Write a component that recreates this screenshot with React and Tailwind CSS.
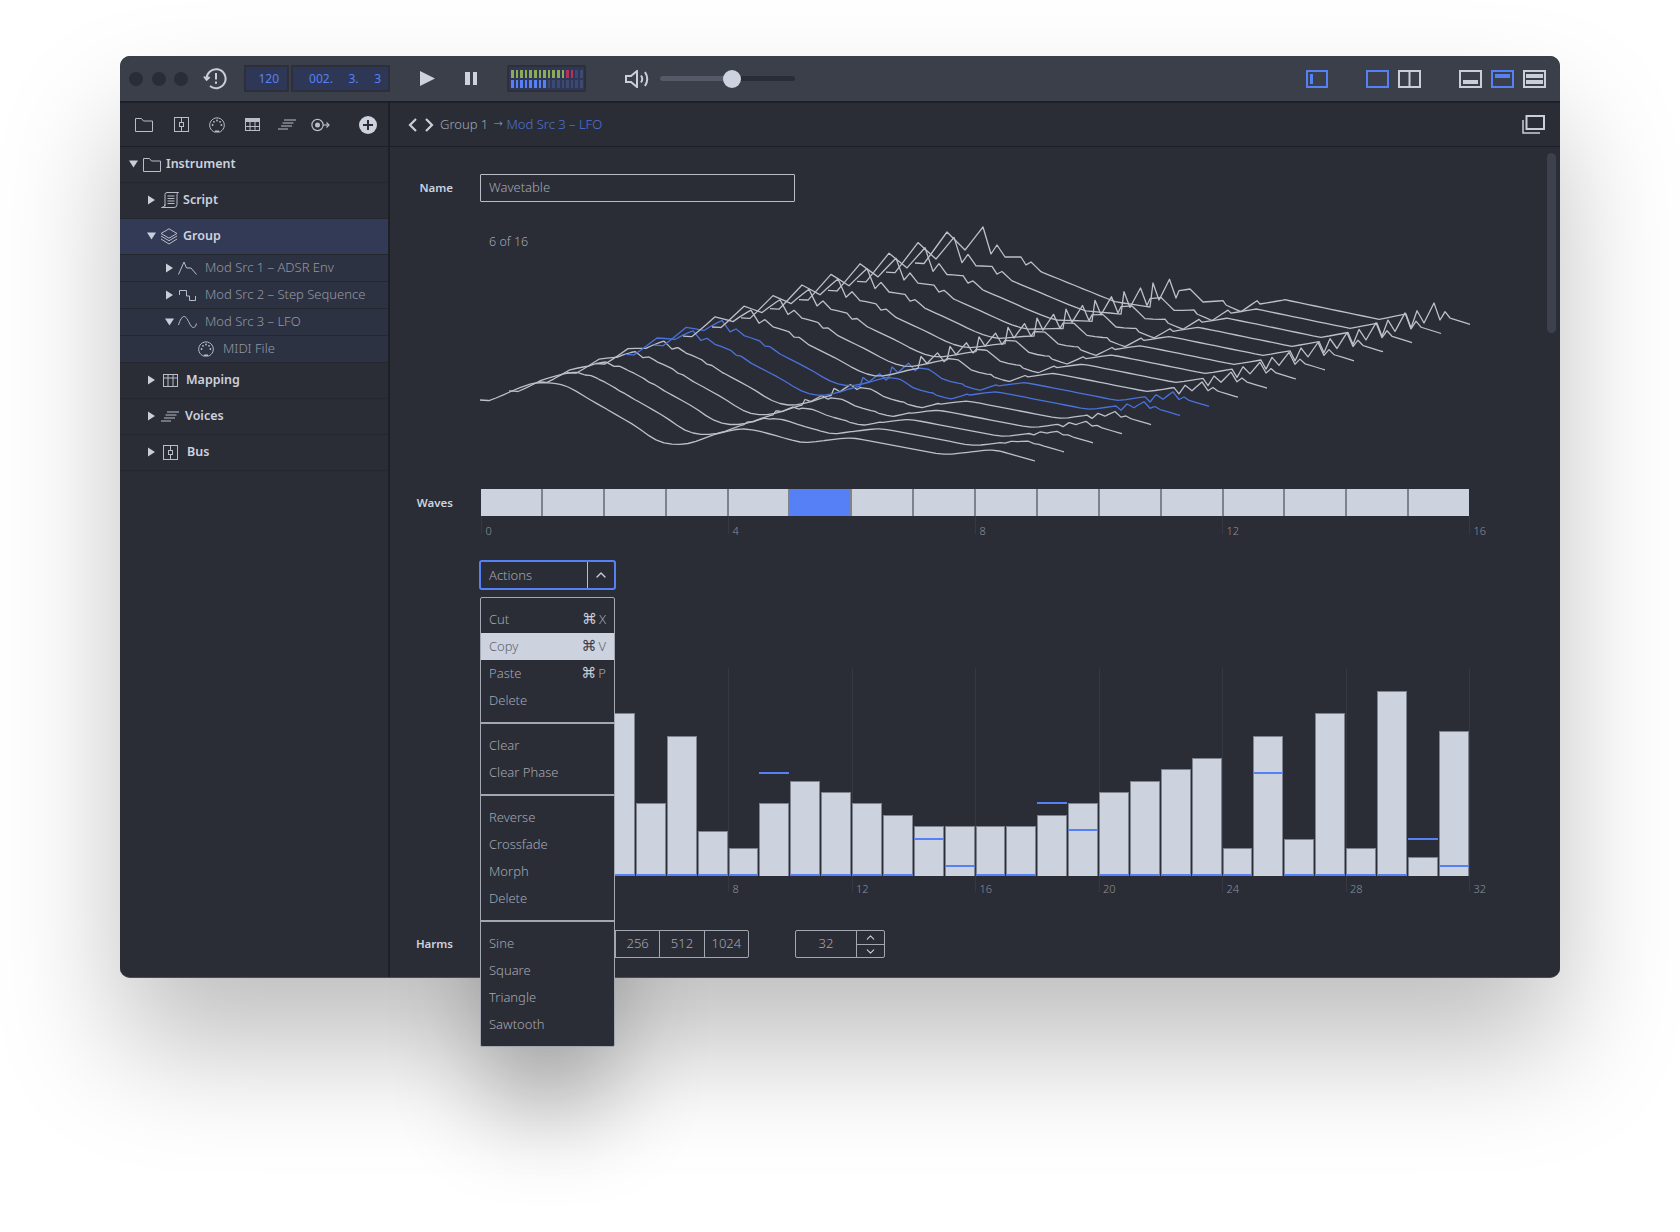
import { ChevronDown, ChevronUp } from 'lucide-react';

const K0 = [[0,0],[10.7,.7],[34,-10],[54,-17.7],[72,-17.3],[88,-14],[102,-5],[157,26.7],[176.7,41.7],[196,45],[212,43.3],[232,35],[259.7,28.3],[275.5,30],[323,43.3],[370.6,37.3],[465,55],[512.9,49.3],[520,51],[555,61]];
const K15 = [[0,0],[9,.5],[32,-31],[50,-13],[68,-36],[76,-9],[82,-18],[90,-6],[106,-6],[111,2],[116,-1],[126,8.7],[200,38.7],[235,44],[238,20],[244,37],[254.5,16.3],[261,35],[264,27.7],[275,26],[288,39],[308,37.7],[311,42],[326,48.7],[342,37.7],[345,41],[370,36.7],[464,56.3],[491,51],[496,65],[502,47.7],[509,60],[519,40],[525,57],[530,48.7],[535,55],[555,61.3]];

const interp = (pts, t) => {
  for (let i = 1; i < pts.length; i++) {
    if (t <= pts[i][0]) {
      const [t0, v0] = pts[i - 1];
      const [t1, v1] = pts[i];
      return v0 + ((v1 - v0) * (t - t0)) / (t1 - t0);
    }
  }
  return pts[pts.length - 1][1];
};

// the front wave is round, so average it a little
const smooth = (pts, t) => {
  const sample = [-8, -4, 0, 4, 8].map((d) => interp(pts, Math.min(555, Math.max(0, t + d))));
  return sample.reduce((sum, v) => sum + v, 0) / sample.length;
};

const grid = [...new Set([
  ...K15.map((p) => p[0]),
  ...Array.from({ length: 70 }, (_, i) => i * 8),
])].filter((t) => t <= 555).concat(555).sort((a, b) => a - b);

const wavePoints = (k) => grid.map((t) => {
  const a = k / 15;
  const edge = t < 10 || t > 545;
  const hump = t > 190 && t < 300 ? 7 * Math.sin(Math.PI * a) * Math.sin((Math.PI * (t - 190)) / 110) : 0;
  const dy = (edge ? interp(K0, t) : smooth(K0, t)) * (1 - a) + interp(K15, t) * a - hump;
  return `${(t + 29 * k).toFixed(1)},${(175 + dy - 9.13 * k).toFixed(1)}`;
}).join(' ');

const BARS = [
  { top: 800 }, { top: 780 }, { top: 760 }, { top: 740 },
  { top: 714.3, m: 875 }, { top: 804.3, m: 875 }, { top: 736.7, m: 875 }, { top: 831.7, m: 875 },
  { top: 849.3, m: 875 }, { top: 804.3, m: 772.7 }, { top: 781.7, m: 875 }, { top: 793.3, m: 875 },
  { top: 804.3, m: 875 }, { top: 815.7, m: 875 }, { top: 826.7, m: 839 }, { top: 826.7, m: 866 },
  { top: 826.7, m: 875 }, { top: 826.7, m: 875 }, { top: 815.7, m: 803 }, { top: 804.3, m: 830 },
  { top: 793.3, m: 875 }, { top: 781.7, m: 875 }, { top: 770.3, m: 875 }, { top: 759.3, m: 875 },
  { top: 849.3, m: 875 }, { top: 736.7, m: 772.7 }, { top: 840.3, m: 875 }, { top: 714.3, m: 875 },
  { top: 849.3, m: 875 }, { top: 691.7, m: 875 }, { top: 858.3, m: 839 }, { top: 732.3, m: 866 },
];

const MENU = [
  [['Cut', 'X'], ['Copy', 'V', true], ['Paste', 'P'], ['Delete']],
  [['Clear'], ['Clear Phase']],
  [['Reverse'], ['Crossfade'], ['Morph'], ['Delete']],
  [['Sine'], ['Square'], ['Triangle'], ['Sawtooth']],
];

const Svg = ({ w, h, stroke = '#b9bdc8', sw = 1, className = '', children }) => (
  <svg width={w} height={h} viewBox={`0 0 ${w} ${h}`} fill="none" stroke={stroke} strokeWidth={sw} className={`shrink-0 ${className}`}>
    {children}
  </svg>
);

const FolderIcon = () => (
  <Svg w={18} h={15}><path d="M.5 14.5V1.5h6l2 2.5h9v10.5z" /></Svg>
);
const BusIcon = () => (
  <Svg w={16} h={15}>
    <rect x=".5" y=".5" width="14" height="14" />
    <path d="M7.5 .5v5M7.5 9.5v5" />
    <rect x="5.5" y="5.5" width="4" height="4" />
  </Svg>
);
const MidiIcon = ({ size = 16 }) => (
  <svg width={size} height={size} viewBox="0 0 16 16" fill="none" stroke="#b9bdc8" className="shrink-0">
    <path d="M6 15.2a7.3 7.3 0 1 1 4 0" />
    <rect x="6" y="13.5" width="4" height="2" fill="#b9bdc8" stroke="none" />
    <g fill="#b9bdc8" stroke="none">
      <circle cx="3.6" cy="8" r=".9" /><circle cx="5" cy="4.8" r=".9" /><circle cx="8" cy="3.5" r=".9" /><circle cx="11" cy="4.8" r=".9" /><circle cx="12.4" cy="8" r=".9" />
    </g>
  </svg>
);
const TableIcon = () => (
  <Svg w={15} h={13}>
    <rect x=".5" y=".5" width="14" height="12" />
    <rect x="0" y="0" width="15" height="4" fill="#b9bdc8" stroke="none" />
    <path d="M5 4v9M10 4v9M0 8.5h15" />
  </Svg>
);
const VoicesIcon = () => (
  <Svg w={18} h={11} sw={1.2}>
    <path d="M6 1h12M4.5 4h11M3 7h11M0 10h10" />
  </Svg>
);
const RouteIcon = () => (
  <Svg w={19} h={14} sw={1.2}>
    <circle cx="6.5" cy="7" r="5.6" />
    <circle cx="6.5" cy="7" r="2.5" fill="#b9bdc8" stroke="none" />
    <path d="M12 7h6" />
    <path d="M15.5 4.5l2.5 2.5-2.5 2.5" />
  </Svg>
);
const ScriptIcon = () => (
  <Svg w={18} h={16}>
    <path d="M4 14.5V2.5q0-2 2-2h11.5q-1.5 .5-1.5 2v10q0 3-3 3H.5q3 0 3.5-3" />
    <path d="M6.5 4h7M6.5 6.5h7M6.5 9h7M6.5 11.5h7" />
  </Svg>
);
const LayersIcon = () => (
  <Svg w={18} h={17}>
    <path d="M9 .8l8 4.7-8 4.7-8-4.7z" />
    <path d="M1 8l8 4.7L17 8" />
    <path d="M1 11l8 5 8-5" />
  </Svg>
);
const AdsrIcon = () => (
  <Svg w={19} h={14}><path d="M.5 13.5L6 1l2.5 6H13l5.5 6.5" /></Svg>
);
const StepIcon = () => (
  <Svg w={17} h={11}><path d="M.5 5V.5h7V6h3v4.5h6V6" /></Svg>
);
const SineIcon = () => (
  <Svg w={19} h={12}><path d="M.5 9C2 4 4 .5 6 .5s3.5 3 5 6 3 5 4.5 5 2.5-2 3-4" /></Svg>
);
const GridIcon = () => (
  <Svg w={15} h={13}>
    <rect x=".5" y=".5" width="14" height="12" />
    <path d="M5 .5v12M10 .5v12M.5 4h14" />
  </Svg>
);
const Caret = ({ open, color = '#c9ced9' }) => (
  <svg width="9" height="10" viewBox="0 0 9 10" fill={color} className="shrink-0">
    {open ? <path d="M0 1.5h9L4.5 8.5z" /> : <path d="M1 .5l7 4.5-7 4.5z" />}
  </svg>
);

const Frame = ({ blue, children, w = 23 }) => {
  const c = blue ? '#5680f5' : '#c9ced9';
  return (
    <svg width={w} height="18" viewBox={`0 0 ${w} 18`} fill="none" className="shrink-0">
      <rect x="1" y="1" width={w - 2} height="16" stroke={c} strokeWidth="2" />
      <g fill={c} stroke={c}>{children}</g>
    </svg>
  );
};

const TREE = [
  { label: 'Instrument', Icon: FolderIcon, open: true, caret: 'pl-[9px]', gap: 'ml-[5px]', textGap: 'ml-[5px]', h: 'h-[36px]' },
  { label: 'Script', Icon: ScriptIcon, caret: 'pl-[27px]', gap: 'ml-[5px]', textGap: 'ml-[4px]', h: 'h-[36px]' },
  { label: 'Group', Icon: LayersIcon, open: true, caret: 'pl-[27px]', gap: 'ml-[4px]', textGap: 'ml-[5px]', h: 'h-[36px]', group: true },
  { label: 'Mod Src 1 – ADSR Env', Icon: AdsrIcon, caret: 'pl-[45px]', gap: 'ml-[4px]', textGap: 'ml-[8px]', sub: true },
  { label: 'Mod Src 2 – Step Sequence', Icon: StepIcon, caret: 'pl-[45px]', gap: 'ml-[5px]', textGap: 'ml-[9px]', sub: true },
  { label: 'Mod Src 3 – LFO', Icon: SineIcon, open: true, caret: 'pl-[45px]', gap: 'ml-[4px]', textGap: 'ml-[8px]', sub: true },
  { label: 'MIDI File', Icon: MidiIcon, caret: 'pl-[78px]', noCaret: true, textGap: 'ml-[9px]', sub: true },
  { label: 'Mapping', Icon: GridIcon, caret: 'pl-[27px]', gap: 'ml-[7px]', textGap: 'ml-[8px]', h: 'h-[36px]' },
  { label: 'Voices', Icon: VoicesIcon, caret: 'pl-[27px]', gap: 'ml-[5px]', textGap: 'ml-[6px]', h: 'h-[36px]' },
  { label: 'Bus', Icon: BusIcon, caret: 'pl-[27px]', gap: 'ml-[7px]', textGap: 'ml-[8px]', h: 'h-[36px]' },
];

const TreeRow = ({ item }) => {
  const { label, Icon, open, caret, gap, textGap, h, group, sub, noCaret } = item;
  const bg = group ? 'bg-[#333a55]' : sub ? 'bg-[#2d3243]' : '';
  return (
    <div className={`flex items-center border-b border-[#25272f] ${caret} ${sub ? 'h-[27px]' : `${h} pb-[1px]`} ${bg}`}>
      {!noCaret && <Caret open={open} />}
      <div className={gap}><Icon /></div>
      <span className={`${textGap} ${sub ? 'text-[13px] font-light text-[#9498a4]' : 'text-[12.5px] font-semibold text-[#ccd2de]'}`}>{label}</span>
    </div>
  );
};

const Meter = () => (
  <div className="ml-[30px] flex h-[27px] w-[79px] items-center justify-center rounded-[2px] bg-[#2d303a]">
    <div className="flex h-[23px] w-[75px] flex-col justify-center gap-[2px] bg-[#2e3856] pl-[2px]">
      <div className="flex h-[8px] gap-[2px]">
        {Array.from({ length: 16 }).map((_, i) => (
          <div key={i} className={`w-[2.6px] ${i < 12 ? 'bg-[#8cab52]' : i < 14 ? 'bg-[#b5325a]' : 'bg-[#3d4a70]'}`} />
        ))}
      </div>
      <div className="flex h-[8px] gap-[2px]">
        {Array.from({ length: 16 }).map((_, i) => (
          <div key={i} className={`w-[2.6px] ${i < 8 ? 'bg-[#5680f5]' : 'bg-[#3d4a70]'}`} />
        ))}
      </div>
    </div>
  </div>
);

const Toolbar = () => (
  <div className="flex h-[47px] shrink-0 items-center rounded-t-[10px] border-b-2 border-[#1d1f26] bg-[#3b3f4a] pl-[9px]">
    <div className="flex gap-[8.5px]">
      <div className="h-[14px] w-[14px] rounded-full bg-[#2a2d36]" />
      <div className="h-[14px] w-[14px] rounded-full bg-[#2a2d36]" />
      <div className="h-[14px] w-[14px] rounded-full bg-[#2a2d36]" />
    </div>
    <svg width="24" height="24" viewBox="0 0 24 24" fill="none" stroke="#c9ced9" strokeWidth="2" className="ml-[15px] shrink-0">
      <path d="M3.6 12.5A9.5 9.5 0 1 1 7 19" />
      <path d="M1 9.5l2.6 3.3 3-2.8" />
      <path d="M13 6v6.5M13 14.5v2.2" />
    </svg>
    <div className="ml-[17px] flex h-[27px] w-[45px] items-center justify-end border-2 border-[#2d303a] bg-[#2e3856] pr-[8px] text-[12px] text-[#5680f5]">120</div>
    <div className="ml-[2px] flex h-[27px] w-[99px] items-center justify-end whitespace-pre border-2 border-[#2d303a] bg-[#2e3856] pr-[7px] text-[12px] text-[#5680f5]">002.     3.     3</div>
    <svg width="15" height="15" viewBox="0 0 15 15" fill="#ccd2de" className="ml-[30px] shrink-0"><path d="M0 0l15 7.5L0 15z" /></svg>
    <div className="ml-[30px] flex gap-[3px]">
      <div className="h-[13px] w-[4.5px] bg-[#ccd2de]" />
      <div className="h-[13px] w-[4.5px] bg-[#ccd2de]" />
    </div>
    <Meter />
    <svg width="25" height="18" viewBox="0 0 25 18" fill="none" stroke="#c9ced9" strokeWidth="2" className="ml-[39px] shrink-0">
      <path d="M1 6h5l6-5v16l-6-5H1z" />
      <path d="M16 5.5q2.5 3.5 0 7M20 2q4.5 7 0 14" />
    </svg>
    <div className="relative ml-[10px] h-[5px] w-[135px] rounded-full bg-[#2a2d36]">
      <div className="h-full w-[72px] rounded-l-full bg-[#565a68]" />
      <div className="absolute left-[63px] top-[-6.5px] h-[18px] w-[18px] rounded-full bg-[#ccd2de]" />
    </div>
    <div className="ml-[511px]">
      <Frame blue w={22}><rect x="4" y="4" width="3" height="10" stroke="none" /></Frame>
    </div>
    <div className="ml-[38px]"><Frame blue /></div>
    <div className="ml-[9px]">
      <Frame><path d="M11.5 1v16" strokeWidth="2" fill="none" /></Frame>
    </div>
    <div className="ml-[38px]"><Frame><rect x="4" y="10" width="15" height="4" stroke="none" /></Frame></div>
    <div className="ml-[9px]"><Frame blue><rect x="4" y="4" width="15" height="4" stroke="none" /></Frame></div>
    <div className="ml-[9px]">
      <Frame>
        <rect x="3" y="4" width="17" height="4" stroke="none" />
        <rect x="3" y="10" width="17" height="4" stroke="none" />
      </Frame>
    </div>
  </div>
);

const Secondbar = () => (
  <div className="flex h-[44px] shrink-0 border-b border-[#1d1f26] bg-[#2a2d36]">
    <div className="flex w-[270px] items-center border-r-2 border-[#1d1f26] pl-[15px]">
      <FolderIcon />
      <div className="ml-[21px]"><BusIcon /></div>
      <div className="ml-[19px]"><MidiIcon /></div>
      <div className="ml-[20px]"><TableIcon /></div>
      <div className="ml-[18px]"><VoicesIcon /></div>
      <div className="ml-[15px]"><RouteIcon /></div>
      <svg width="18" height="18" viewBox="0 0 18 18" className="ml-[29px] shrink-0">
        <circle cx="9" cy="9" r="9" fill="#ccd2de" />
        <path d="M9 4v10M4 9h10" stroke="#2a2d36" strokeWidth="2" />
      </svg>
    </div>
    <div className="flex flex-1 items-center pl-[18px] pr-[15px] text-[13px] font-light">
      <svg width="9" height="14" viewBox="0 0 9 14" fill="none" stroke="#c9ced9" strokeWidth="2.2" className="shrink-0"><path d="M8 1L2 7l6 6" /></svg>
      <svg width="9" height="14" viewBox="0 0 9 14" fill="none" stroke="#c9ced9" strokeWidth="2.2" className="ml-[8px] shrink-0"><path d="M1 1l6 6-6 6" /></svg>
      <span className="ml-[6px] text-[#a3a7b2]">Group 1</span>
      <span className="ml-[5px] font-['DejaVu_Sans'] text-[11px] text-[#a3a7b2]">→</span>
      <span className="ml-[4px] text-[#4f73d6]">Mod Src 3 – LFO</span>
      <svg width="23" height="19" viewBox="0 0 23 19" fill="none" stroke="#c9ced9" className="ml-auto shrink-0">
        <rect x="4.5" y="1" width="17.5" height="13" strokeWidth="2" />
        <path d="M1 5v13h17" strokeWidth="1.5" />
      </svg>
    </div>
  </div>
);

const Sidebar = () => (
  <div className="w-[270px] shrink-0 rounded-bl-[10px] border-r-2 border-[#1d1f26] bg-[#2a2d36]">
    {TREE.map((item) => <TreeRow key={item.label} item={item} />)}
  </div>
);

const ActionsMenu = () => (
  <div className="absolute left-[90px] top-[450px] z-20 w-[135px] rounded-[2px] border border-[#a3a7b2] bg-[#2a2d36] text-[13px] font-light text-[#a3a7b2]">
    {MENU.map((section, s) => (
      <div key={s} className={`py-[8px] ${s < MENU.length - 1 ? 'border-b-2 border-[#a3a7b2]' : ''}`}>
        {section.map(([label, key, active]) => (
          <div key={label} className={`flex h-[27px] items-center justify-between pl-[8px] pr-[8px] ${active ? 'bg-[#ccd2de] text-[#5f636e]' : ''}`}>
            <span>{label}</span>
            {key && (
              <span className="flex items-center gap-[2px]">
                <span className={`font-['DejaVu_Sans'] text-[15px] font-normal ${active ? 'text-[#3a3e4a]' : 'text-[#c9ced9]'}`}>⌘</span>
                <span>{key}</span>
              </span>
            )}
          </div>
        ))}
      </div>
    ))}
  </div>
);

const Row = ({ label, children, className = '' }) => (
  <div className={`flex ${className}`}>
    <div className="flex w-[63px] shrink-0 items-center justify-end text-[11.5px] font-semibold text-[#ccd2de]">{label}</div>
    <div className="ml-[28px] flex-1">{children}</div>
  </div>
);

const Ticks = ({ labels }) => (
  <>
    {labels.map((l, i) => (
      <div key={i} className="absolute top-0 h-full border-l border-[#353842]" style={{ left: `${(i / (labels.length - 1)) * 100}%` }}>
        <span className="absolute bottom-[-5px] left-[3.5px] text-[11px] font-light text-[#8d919c]">{l}</span>
      </div>
    ))}
  </>
);

const Main = () => (
  <div className="relative flex-1 rounded-br-[10px] bg-[#2a2d36] pt-[27px]">
    <div className="absolute right-[4px] top-[6px] h-[180px] w-[9px] rounded-full bg-[#3d414d]" />
    <Row label="Name" className="h-[28px]">
      <div className="ml-[-1px] flex h-[28px] w-[315px] items-center rounded-[1px] border border-[#b9bdc8] pl-[8px] text-[13px] font-light text-[#a3a7b2]">Wavetable</div>
    </Row>
    <div className="relative ml-[90px] mt-[23px] h-[240px]">
      <span className="absolute left-[9px] top-[8px] text-[12.5px] font-light text-[#a3a7b2]">6 of 16</span>
      <svg width="992" height="240" viewBox="0 0 992 240" fill="none" className="block overflow-visible">
        {Array.from({ length: 16 }).map((_, k) => (
          <polyline key={k} points={wavePoints(k)} stroke={k === 5 || k === 6 ? '#4a72dc' : '#bcc0cb'} strokeWidth="1.3" strokeLinejoin="round" />
        ))}
      </svg>
    </div>
    <Row label="Waves" className="mt-[24px] h-[27px]">
      <div className="flex h-[27px] w-[988px]">
        {Array.from({ length: 16 }).map((_, i) => (
          <div key={i} className={`flex-1 ${i < 15 ? 'border-r-2 border-[#7f838e]' : ''} ${i === 5 ? 'bg-[#5680f5]' : 'bg-[#ccd2de]'}`} />
        ))}
      </div>
    </Row>
    <div className="relative ml-[91px] h-[18px] w-[988px]">
      <Ticks labels={['0', '4', '8', '12', '16']} />
    </div>
    <div className="ml-[89px] mt-[26px] flex h-[30px] w-[137px] rounded-[3px] border-2 border-[#5680f5] text-[13px] font-light text-[#a3a7b2]">
      <div className="flex flex-1 items-center border-r border-[#b9bdc8] pl-[8px] pt-[1px]">Actions</div>
      <div className="flex w-[26px] items-center justify-center"><ChevronUp size={16} className="text-[#c9ced9]" /></div>
    </div>
    <ActionsMenu />
    <div className="relative ml-[91px] mt-[78px] h-[224px] w-[988px]">
      <Ticks labels={['', '', '8', '12', '16', '20', '24', '28', '32']} />
      <div className="relative flex h-[208px] items-end">
        {BARS.map((bar, i) => (
          <div key={i} className="relative h-full flex-1">
            <div className="absolute bottom-0 left-[0.5px] right-[0.5px] border border-b-0 border-[#7f838e] bg-[#ccd2de]" style={{ height: 877 - bar.top }} />
            {bar.m && <div className="absolute left-[0.5px] right-[0.5px] h-[2px] bg-[#5680f5]" style={{ top: bar.m - 669 }} />}
          </div>
        ))}
      </div>
    </div>
    <Row label="Harms" className="mt-[38px] h-[28px]">
      <div className="flex items-center">
        <div className="flex h-[28px] rounded-[2px] border border-[#a3a7b2] text-[13px] font-light text-[#a3a7b2]">
          {['', '', '', '256', '512', '1024'].map((n, i) => (
            <div key={i} className={`flex w-[44.33px] items-center justify-center ${i > 0 ? 'border-l border-[#a3a7b2]' : ''}`}>{n}</div>
          ))}
        </div>
        <div className="ml-[46px] flex h-[28px] w-[90px] rounded-[2px] border border-[#a3a7b2] text-[13px] font-light text-[#a3a7b2]">
          <div className="flex flex-1 items-center justify-center border-r border-[#a3a7b2]">32</div>
          <div className="flex w-[27px] flex-col">
            <div className="flex flex-1 items-center justify-center border-b border-[#a3a7b2]"><ChevronUp size={13} className="text-[#c9ced9]" /></div>
            <div className="flex flex-1 items-center justify-center"><ChevronDown size={13} className="text-[#c9ced9]" /></div>
          </div>
        </div>
      </div>
    </Row>
  </div>
);

export default function App() {
  return (
    <div className="min-h-[1232px] overflow-hidden bg-white pl-[120px] pt-[56px] font-['Noto_Sans',sans-serif]">
      <div className="relative h-[922px] w-[1440px]">
        <div className="absolute left-[361px] top-[541px] h-[450px] w-[134px] shadow-[0_70px_90px_rgba(0,0,0,0.24)]" />
        <div className="relative z-10 flex h-full flex-col rounded-[10px] border-b border-[#4a4d57] bg-[#2a2d36] shadow-[0_70px_120px_rgba(0,0,0,0.25)]">
          <Toolbar />
          <Secondbar />
          <div className="flex flex-1">
            <Sidebar />
            <Main />
          </div>
        </div>
      </div>
    </div>
  );
}
